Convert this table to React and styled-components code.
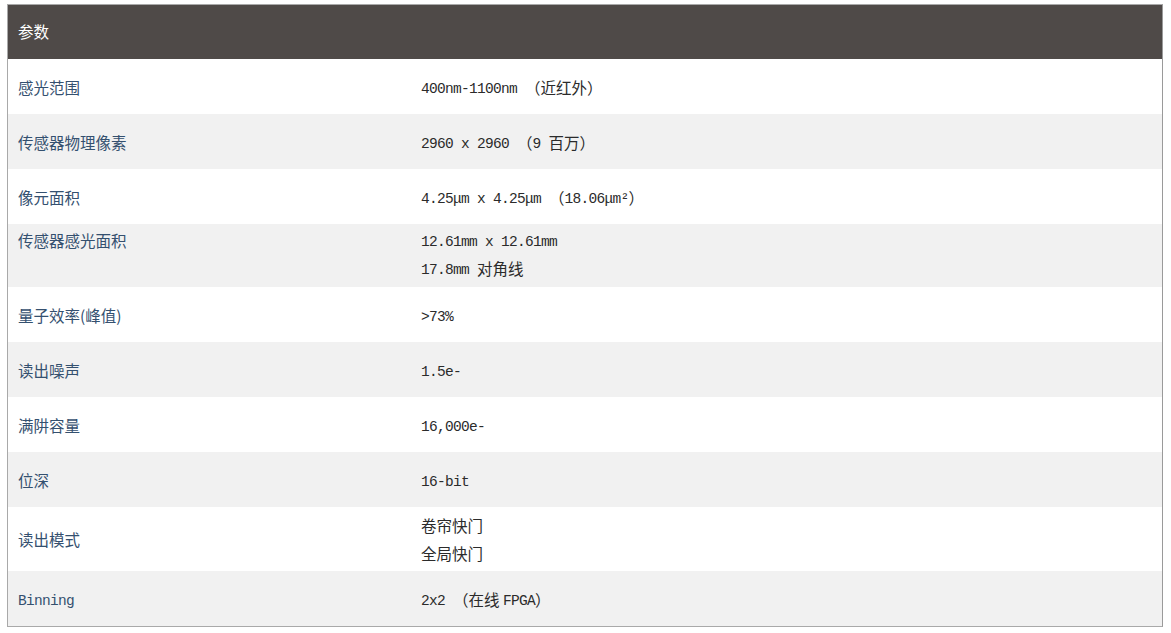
import React from 'react';
import styled, { createGlobalStyle } from 'styled-components';

const GlobalStyle = createGlobalStyle`
  html, body {
    margin: 0;
    padding: 0;
    background: #ffffff;
  }
  body {
    font-family: "Liberation Mono", "Noto Sans CJK SC", monospace;
  }
`;

const Page = styled.div`
  padding: 4px 0 0 7px;
  width: 1156px;
`;

const Table = styled.div`
  display: grid;
  grid-template-columns: 403px 1fr;
  border: 1px solid #a9a9a9;
  border-right-color: #9a9a9a;
`;

const HeadCell = styled.div`
  background: #4f4a48;
  height: 54px;
  display: flex;
  align-items: center;
  padding: 0 10px;
  color: #ffffff;
`;

const Cell = styled.div`
  background: ${(p) => (p.$shade ? '#f1f1f1' : '#ffffff')};
  min-height: 55px;
  box-sizing: border-box;
  padding: ${(p) => (p.$top ? '4px 10px 3px' : '6px 10px 2px')};
  display: flex;
  flex-direction: column;
  justify-content: ${(p) => (p.$top ? 'flex-start' : 'center')};
  font-size: 14.5px;
  letter-spacing: -0.7px;
  color: ${(p) => (p.$label ? '#34506f' : '#2b2b2b')};
`;

const Line = styled.div`
  height: 28px;
  line-height: 28px;
  white-space: pre;
`;

const Zh = styled.span`
  font-family: "Noto Sans CJK SC", sans-serif;
  font-size: 15.5px;
  letter-spacing: 0;
  line-height: 1;
  vertical-align: -1px;
`;

const rows = [
  { label: '感光范围', lines: [['400nm-1100nm ', <Zh key="z">（近红外）</Zh>]] },
  { label: '传感器物理像素', lines: [['2960 x 2960 ', <Zh key="z">（</Zh>, '9 ', <Zh key="y">百万）</Zh>]] },
  { label: '像元面积', lines: [['4.25μm x 4.25μm ', <Zh key="z">（</Zh>, '18.06μm²', <Zh key="y">）</Zh>]] },
  {
    label: '传感器感光面积',
    top: true,
    lines: [['12.61mm x 12.61mm'], ['17.8mm ', <Zh key="z">对角线</Zh>]],
  },
  { label: '量子效率(峰值)', lines: [['>73%']] },
  { label: '读出噪声', lines: [['1.5e-']] },
  { label: '满阱容量', lines: [['16,000e-']] },
  { label: '位深', lines: [['16-bit']] },
  { label: '读出模式', lines: [[<Zh key="z">卷帘快门</Zh>], [<Zh key="z">全局快门</Zh>]] },
  { label: 'Binning', latin: true, lines: [['2x2 ', <Zh key="z">（在线 </Zh>, 'FPGA', <Zh key="y">）</Zh>]] },
];

export default function App() {
  return (
    <>
      <GlobalStyle />
      <Page>
        <Table>
          <HeadCell>
            <Zh>参数</Zh>
          </HeadCell>
          <HeadCell />
          {rows.map((row, i) => (
            <React.Fragment key={row.label}>
              <Cell $label $shade={i % 2 === 1} $top={row.top}>
                <Line>{row.latin ? row.label : <Zh>{row.label}</Zh>}</Line>
              </Cell>
              <Cell $shade={i % 2 === 1} $top={row.top}>
                {row.lines.map((parts, j) => (
                  <Line key={j}>{parts}</Line>
                ))}
              </Cell>
            </React.Fragment>
          ))}
        </Table>
      </Page>
    </>
  );
}
